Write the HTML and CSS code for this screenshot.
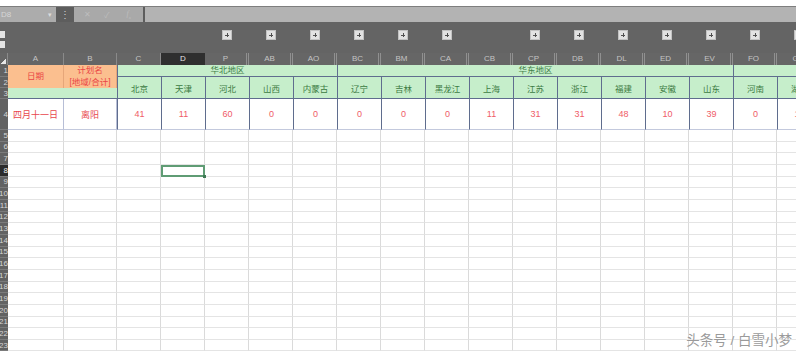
FILE: index.html
```html
<!DOCTYPE html>
<html lang="zh">
<head>
    <meta charset="UTF-8">
    <title>销售统计表</title>
    <link rel="stylesheet" href="styles.css">
</head>
<body>

    <div class="topline"></div>

    <div class="formula-bar">
        <div class="name-box"><span class="ref">D8</span><span class="caret">▾</span></div>
        <div class="grip">⋮</div>
        <div class="fx-tools"><span>✕</span><span>✓</span><span class="fx">f<sub>x</sub></span></div>
        <div class="formula-input"></div>
    </div>

    <!-- barra de grupos (columnas ocultas) -->
    <div class="outline-bar cols">
        <div class="levels"><span></span><span></span></div>
        <div></div><div></div><div></div><div></div>
        <div><span class="plus"></span></div>
        <div><span class="plus"></span></div>
        <div><span class="plus"></span></div>
        <div><span class="plus"></span></div>
        <div><span class="plus"></span></div>
        <div><span class="plus"></span></div>
        <div></div>
        <div><span class="plus"></span></div>
        <div><span class="plus"></span></div>
        <div><span class="plus"></span></div>
        <div><span class="plus"></span></div>
        <div><span class="plus"></span></div>
        <div><span class="plus"></span></div>
        <div><span class="plus"></span></div>
    </div>

    <div class="col-heads cols">
        <div class="corner"></div>
        <div>A</div><div>B</div><div>C</div>
        <div class="current">D</div>
        <div class="hidden-after">P</div>
        <div class="hidden-after">AB</div>
        <div class="hidden-after">AO</div>
        <div class="hidden-after">BC</div>
        <div class="hidden-after">BM</div>
        <div class="hidden-after">CA</div>
        <div class="hidden-after">CB</div>
        <div class="hidden-after">CP</div>
        <div class="hidden-after">DB</div>
        <div class="hidden-after">DL</div>
        <div class="hidden-after">ED</div>
        <div class="hidden-after">EV</div>
        <div class="hidden-after">FO</div>
        <div>GH</div>
    </div>

    <div class="sheet cols" id="sheet">
        <!-- fila 1 -->
        <div class="rh">1</div>
        <div class="title">日期</div>
        <div class="title">计划名<br>[地域/合计]</div>
        <div class="region north">华北地区</div>
        <div class="region east">华东地区</div>
        <div class="region central"></div>

        <!-- fila 2 -->
        <div class="rh">2</div>
        <div class="prov">北京</div>
        <div class="prov">天津</div>
        <div class="prov">河北</div>
        <div class="prov">山西</div>
        <div class="prov">内蒙古</div>
        <div class="prov">辽宁</div>
        <div class="prov">吉林</div>
        <div class="prov">黑龙江</div>
        <div class="prov">上海</div>
        <div class="prov">江苏</div>
        <div class="prov">浙江</div>
        <div class="prov">福建</div>
        <div class="prov">安徽</div>
        <div class="prov">山东</div>
        <div class="prov">河南</div>
        <div class="prov">湖北</div>

        <!-- fila 3 -->
        <div class="rh">3</div>
        <div class="band"></div>

        <!-- fila 4: datos -->
        <div class="rh">4</div>
        <div class="day">四月十一日</div>
        <div class="day">离阳</div>
        <div class="num">41</div>
        <div class="num">11</div>
        <div class="num">60</div>
        <div class="num">0</div>
        <div class="num">0</div>
        <div class="num">0</div>
        <div class="num">0</div>
        <div class="num">0</div>
        <div class="num">11</div>
        <div class="num">31</div>
        <div class="num">31</div>
        <div class="num">48</div>
        <div class="num">10</div>
        <div class="num">39</div>
        <div class="num">0</div>
        <div class="num">13</div>
    </div>

    <div class="watermark">头条号 / 白雪小梦</div>

    <script src="script.js"></script>
</body>
</html>
```

FILE: styles.css
```css
* {
    box-sizing: border-box;
}

body {
    margin: 0;
    width: 796px;
    height: 352px;
    overflow: hidden;
    position: relative;
    background-color: #fff;
    font-family: "Liberation Sans", "Noto Sans CJK SC", sans-serif;
}

.topline {
    height: 6px;
    background-color: #fff;
}

/* barra de formulas */
.formula-bar {
    display: flex;
    height: 16px;
    background-color: #5d5d5d;
    border-top: 1px solid #7e7e7e;
}

.name-box {
    width: 56px;
    background-color: #acacac;
    display: flex;
    justify-content: space-between;
    align-items: center;
    font-size: 8px;
    color: #d6d6d6;
    overflow: hidden;
}

.name-box .ref {
    margin-left: 1px;
}

.name-box .caret {
    font-size: 7px;
    margin-right: 4px;
    color: #dcdcdc;
}

.grip {
    width: 18px;
    text-align: center;
    color: #d0d0d0;
    font-size: 10px;
    line-height: 15px;
}

.fx-tools {
    width: 69px;
    background-color: #a9a9a9;
    display: flex;
    align-items: center;
    gap: 13px;
    padding-left: 10px;
    font-size: 8px;
    color: #bdbdbd;
}

.fx-tools .fx {
    font-style: italic;
    font-family: "Liberation Serif", serif;
    margin-left: 4px;
}

.fx-tools sub {
    font-size: 5px;
}

.formula-input {
    flex: 1;
    background-color: #b3b3b3;
    margin-left: 2px;
}

/* columnas compartidas */
.cols {
    display: grid;
    grid-template-columns: 8px 56px 53px repeat(16, 44px);
}

.outline-bar {
    height: 31px;
    background-color: #646464;
}

.outline-bar > div {
    display: flex;
    justify-content: center;
    padding-top: 8px;
}

.levels {
    flex-direction: column;
    gap: 3px;
}

.outline-bar .levels {
    padding-top: 9px;
    justify-content: flex-start;
    align-items: flex-start;
}

.levels span {
    display: block;
    width: 6px;
    height: 7px;
    margin-left: -1px;
    background-color: #e4e4e4;
}

.plus {
    position: relative;
    display: block;
    width: 10px;
    height: 10px;
    background-color: #e2e2e2;
    border: 1px solid #c2c2c2;
}

.plus::before,
.plus::after {
    content: "";
    position: absolute;
    background-color: #505050;
}

.plus::before {
    left: 2px;
    top: 3.5px;
    width: 4px;
    height: 1px;
}

.plus::after {
    left: 3.5px;
    top: 2px;
    width: 1px;
    height: 4px;
}

/* cabecera de columnas */
.col-heads {
    height: 12px;
    background-color: #666;
}

.col-heads > div {
    font-size: 8px;
    line-height: 12px;
    text-align: center;
    color: #c4c4c4;
    border-right: 1px solid #8a8a8a;
}

.col-heads .corner {
    background: linear-gradient(135deg, transparent 58%, #e6e6e6 58%);
    background-size: 6px 6px;
    background-repeat: no-repeat;
    background-position: right 1px bottom 1px;
    border-right: 1px solid #8a8a8a;
}

.col-heads .current {
    background-color: #2f2f2f;
    color: #e4e4e4;
    border-right: none;
}

.col-heads .hidden-after {
    border-right: 3px double #909090;
}

/* hoja */
.sheet {
    grid-template-rows: 12px 11px 11px 31px;
    grid-auto-rows: 11.67px;
}

.rh {
    background-color: #626262;
    border-bottom: 1px solid #7b7b7b;
    color: #d6d6d6;
    font-size: 8px;
    display: flex;
    align-items: center;
    justify-content: flex-end;
    overflow: hidden;
}

.rh.current {
    background-color: #2c2c2c;
    color: #eee;
}

.title {
    grid-row: span 2;
    background-color: #fbbf8f;
    border-right: 1px solid #e6a679;
    color: #ea4646;
    font-size: 8.5px;
    line-height: 11.5px;
    display: flex;
    align-items: center;
    justify-content: center;
    text-align: center;
    white-space: nowrap;
}

.region {
    background-color: #c6eecb;
    border-left: 1px solid #5f6d8e;
    border-bottom: 1px solid #5f6d8e;
    color: #3f8046;
    font-size: 8.5px;
    line-height: 11px;
    text-align: center;
}

.region.north {
    grid-column: span 5;
}

.region.east {
    grid-column: span 9;
}

.region.central {
    grid-column: span 2;
}

.prov {
    grid-row: span 2;
    background-color: #c6eecb;
    border-left: 1px solid #5f6d8e;
    border-bottom: 1px solid #5f6d8e;
    color: #3b7a42;
    font-size: 8.5px;
    display: flex;
    align-items: center;
    justify-content: center;
    white-space: nowrap;
}

.band {
    grid-column: span 2;
    background-color: #c6eecb;
    border-bottom: 1px solid #5f6d8e;
}

.day,
.num {
    display: flex;
    align-items: center;
    justify-content: center;
    border-bottom: 1px solid #c3c9dd;
    white-space: nowrap;
}

.day {
    font-size: 9px;
    color: #e8464c;
    border-right: 1px solid #b7bed6;
}

.num {
    font-size: 9px;
    color: #ef5b68;
    border-left: 1px solid #5f6d8e;
}

.cell {
    border-right: 1px solid #dadada;
    border-bottom: 1px solid #e4e4e4;
}

.cell.active {
    position: relative;
    border: 2px solid #5f9c74;
}

.cell.active::after {
    content: "";
    position: absolute;
    right: -3px;
    bottom: -3px;
    width: 3px;
    height: 3px;
    background-color: #3f7a55;
}

.watermark {
    position: absolute;
    right: 4px;
    bottom: 3px;
    font-size: 13.5px;
    line-height: 16px;
    color: #9a9a9a;
    text-shadow: 0 0 2px #fff;
}
```

FILE: script.js
```js
// filas vacias de la hoja (5 a 23)
const sheet = document.getElementById('sheet');

for (let r = 5; r <= 23; r++) {
    const rh = document.createElement('div');
    rh.className = 'rh';
    if (r === 8) rh.classList.add('current');
    rh.textContent = r;
    sheet.appendChild(rh);

    for (let c = 0; c < 18; c++) {
        const cell = document.createElement('div');
        cell.className = 'cell';
        // celda activa D8
        if (r === 8 && c === 3) cell.classList.add('active');
        sheet.appendChild(cell);
    }
}
```
